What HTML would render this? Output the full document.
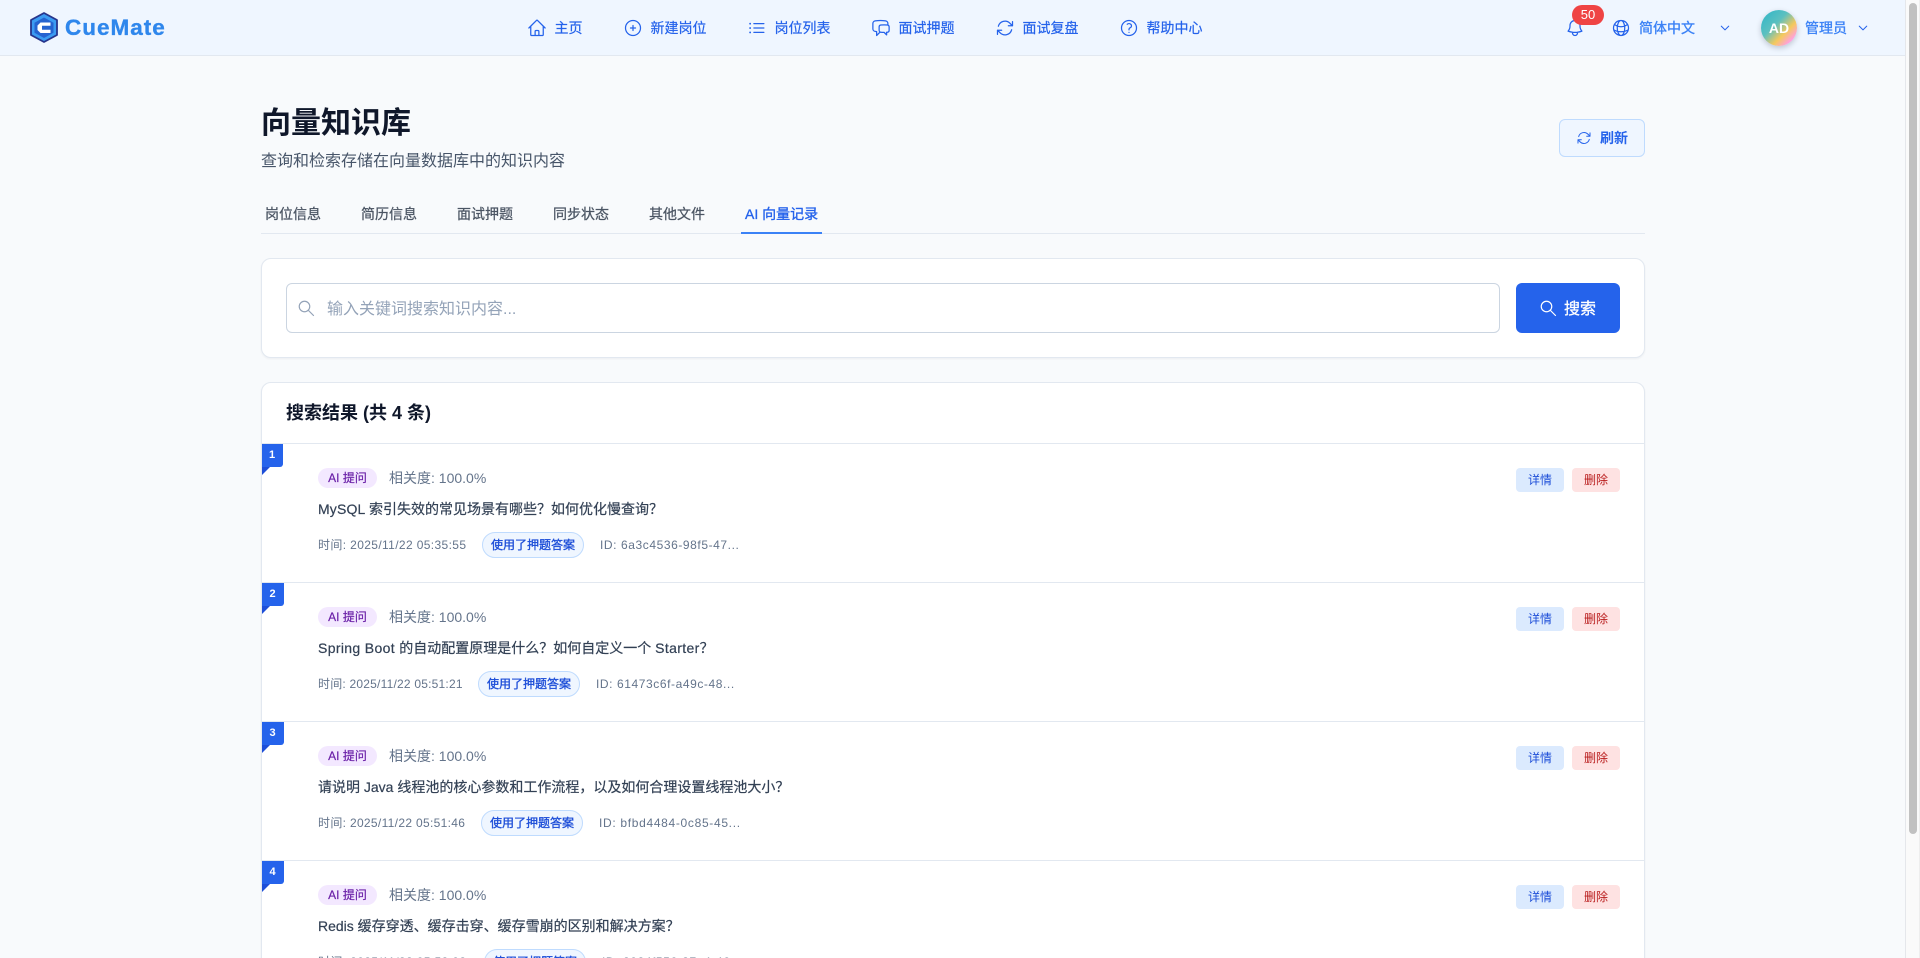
<!DOCTYPE html>
<html lang="zh-CN">
<head>
<meta charset="utf-8">
<title>向量知识库 - CueMate</title>
<style>
*{box-sizing:border-box;margin:0;padding:0}
html,body{width:1920px;height:958px;overflow:hidden;background:#f8fafc;font-family:"Liberation Sans","Noto Sans CJK SC",sans-serif}
#p{position:relative;width:1920px;height:958px;overflow:hidden;background:#f8fafc}
.a{position:absolute;white-space:nowrap}
svg{display:block;fill:none;stroke-linecap:round;stroke-linejoin:round}
.header{left:0;top:0;width:1905px;height:56px;background:#eff6ff;border-bottom:1px solid #e2e8f0}
.nav{font-size:14px;line-height:20px;color:#2563eb;top:18px;-webkit-text-stroke:.2px currentColor}
.ic{stroke:#2563eb;stroke-width:1.5}
.tab{top:204px;font-size:14px;line-height:20px;color:#4b5563;-webkit-text-stroke:.25px currentColor}
.card{background:#fff;border:1px solid #e2e8f0;border-radius:10px;box-shadow:0 1px 2px rgba(15,23,42,.05)}
.sep{left:262px;width:1382px;height:1px;background:#e2e8f0}
.rib{left:262px;width:22px;height:23px;padding-right:1px;background:#2563eb;border-radius:0 0 3px 0;color:#fff;font-size:11px;font-weight:700;line-height:22px;text-align:center}
.tail{left:262px;width:0;height:0;border-top:8px solid #1d4ed8;border-right:8px solid transparent}
.tag{left:318px;width:59px;height:20px;border-radius:10px;background:#f3e8ff;color:#6b21a8;font-size:12px;line-height:20px;text-align:center;-webkit-text-stroke:.2px currentColor}
.rel{left:389px;font-size:14px;line-height:20px;color:#64748b}
.q{left:318px;font-size:14px;line-height:20px;color:#334155;-webkit-text-stroke:.2px currentColor}
.meta{font-size:12px;line-height:16px;color:#64748b;letter-spacing:.37px}
.id{letter-spacing:.58px}
.pill{height:26px;width:102px;border:1px solid #bfdbfe;border-radius:13px;background:#eff6ff;color:#1d4ed8;font-size:12px;line-height:24px;text-align:center;-webkit-text-stroke:.35px currentColor}
.btn{width:48px;height:24px;border-radius:4px;font-size:12px;line-height:24px;text-align:center}
.b1{left:1516px;background:#dbeafe;color:#1d4ed8}
.b2{left:1572px;background:#fee2e2;color:#b91c1c}
.l{letter-spacing:.35px}
</style>
</head>
<body>
<div id="p">
<div class="a header"></div>

<svg class="a" style="left:28px;top:10px;stroke-linecap:butt" width="32" height="35" viewBox="0 0 32 35">
<path d="M16 3 L29 10 V25 L16 32 L3 25 V10 Z" fill="#3b9bf2" stroke="#27358c" stroke-width="1.8"/>
<path d="M16 7.500 L25.500 12.800 V22.700 L16 28 L6.500 22.700 V12.800 Z" fill="#2563d0"/>
<path d="M22.500 12.500 H12.500 L9.500 15.500 V20 L12.500 23 H22.500 V19.800 H14 V15.800 H22.500 Z" fill="#fff"/>
</svg>
<div class="a" style="left:65px;top:15px;font-size:22.500px;line-height:26px;font-weight:700;color:#2f87ec;letter-spacing:1px;-webkit-text-stroke:.35px #2f87ec">CueMate</div>

<svg class="a ic" style="left:526.500px;top:18px" width="20" height="20" viewBox="0 0 24 24"><path d="M2.250 12l8.954-8.955c.44-.439 1.152-.439 1.591 0L21.750 12M4.500 9.750v10.125c0 .621.504 1.125 1.125 1.125H9.750v-4.875c0-.621.504-1.125 1.125-1.125h2.250c.621 0 1.125.504 1.125 1.125V21h4.125c.621 0 1.125-.504 1.125-1.125V9.750M8.250 21h8.250"/></svg>
<div class="a nav" style="left:554.500px">主页</div>
<svg class="a ic" style="left:622.500px;top:18px" width="20" height="20" viewBox="0 0 24 24"><path d="M12 9v6m3-3H9m12 0a9 9 0 1 1-18 0 9 9 0 0 1 18 0Z"/></svg>
<div class="a nav" style="left:650.500px">新建岗位</div>
<svg class="a ic" style="left:746.500px;top:18px" width="20" height="20" viewBox="0 0 24 24"><path d="M8.250 6.750h12M8.250 12h12m-12 5.250h12M3.750 6.750h.007v.008H3.750V6.750Zm.375 0a.375.375 0 1 1-.75 0 .375.375 0 0 1 .75 0ZM3.750 12h.007v.008H3.750V12Zm.375 0a.375.375 0 1 1-.75 0 .375.375 0 0 1 .75 0Zm-.375 5.250h.007v.008H3.750v-.008Zm.375 0a.375.375 0 1 1-.75 0 .375.375 0 0 1 .75 0Z"/></svg>
<div class="a nav" style="left:774.500px">岗位列表</div>
<svg class="a ic" style="left:870.500px;top:18px" width="20" height="20" viewBox="0 0 24 24"><path d="M20.250 8.511c.884.284 1.500 1.128 1.500 2.097v4.286c0 1.136-.847 2.100-1.980 2.193-.34.027-.68.052-1.020.072v3.091l-3-3c-1.354 0-2.694-.055-4.020-.163a2.115 2.115 0 0 1-.825-.242m9.345-8.334a2.126 2.126 0 0 0-.476-.095 48.640 48.640 0 0 0-8.048 0c-1.131.094-1.976 1.057-1.976 2.192v4.286c0 .837.46 1.580 1.155 1.951m9.345-8.334V6.637c0-1.621-1.152-3.026-2.760-3.235A48.455 48.455 0 0 0 11.250 3c-2.115 0-4.198.137-6.240.402-1.608.209-2.760 1.614-2.760 3.235v6.226c0 1.621 1.152 3.026 2.760 3.235.577.075 1.157.14 1.740.194V21l4.155-4.155"/></svg>
<div class="a nav" style="left:898.500px">面试押题</div>
<svg class="a ic" style="left:994.500px;top:18px" width="20" height="20" viewBox="0 0 24 24"><path d="M16.023 9.348h4.992v-.001M2.985 19.644v-4.992m0 0h4.992m-4.993 0 3.181 3.183a8.250 8.250 0 0 0 13.803-3.700M4.031 9.865a8.250 8.250 0 0 1 13.803-3.700l3.181 3.182m0-4.991v4.990"/></svg>
<div class="a nav" style="left:1022.500px">面试复盘</div>
<svg class="a ic" style="left:1118.500px;top:18px" width="20" height="20" viewBox="0 0 24 24"><path d="M9.879 7.519c1.171-1.025 3.071-1.025 4.242 0 1.172 1.025 1.172 2.687 0 3.712-.203.179-.43.326-.67.442-.745.361-1.450.999-1.450 1.827v.75M21 12a9 9 0 1 1-18 0 9 9 0 0 1 18 0Zm-9 5.250h.008v.008H12v-.008Z"/></svg>
<div class="a nav" style="left:1146.500px">帮助中心</div>

<svg class="a ic" style="left:1565px;top:18px" width="20" height="20" viewBox="0 0 24 24"><path d="M14.857 17.082a23.848 23.848 0 0 0 5.454-1.310A8.967 8.967 0 0 1 18 9.750V9A6 6 0 0 0 6 9v.75a8.967 8.967 0 0 1-2.312 6.022c1.733.64 3.560 1.085 5.455 1.310m5.714 0a24.255 24.255 0 0 1-5.714 0m5.714 0a3 3 0 1 1-5.714 0"/></svg>
<div class="a" style="left:1572px;top:5px;width:32px;height:20px;border-radius:10px;background:#ef4444;color:#fff;font-size:13px;line-height:20px;text-align:center">50</div>
<svg class="a ic" style="left:1611px;top:18px" width="20" height="20" viewBox="0 0 24 24"><path d="M12 21a9.004 9.004 0 0 0 8.716-6.747M12 21a9.004 9.004 0 0 1-8.716-6.747M12 21c2.485 0 4.500-4.030 4.500-9S14.485 3 12 3m0 18c-2.485 0-4.500-4.030-4.500-9S9.515 3 12 3m0 0a8.997 8.997 0 0 1 7.843 4.582M12 3a8.997 8.997 0 0 0-7.843 4.582m15.686 0A11.953 11.953 0 0 1 12 10.500c-2.998 0-5.740-1.100-7.843-2.918m15.686 0A8.959 8.959 0 0 1 21 12c0 .778-.099 1.533-.284 2.253m0 0A17.919 17.919 0 0 1 12 16.500c-3.162 0-6.133-.815-8.716-2.247m0 0A9.004 9.004 0 0 1 3 12c0-1.605.42-3.113 1.157-4.418"/></svg>
<div class="a nav" style="left:1639px;color:#3b82f6;-webkit-text-stroke:.35px #3b82f6">简体中文</div>
<svg class="a" style="left:1719px;top:22px;stroke:#2563eb;stroke-width:2" width="12" height="12" viewBox="0 0 24 24"><path d="m19.500 8.250-7.500 7.500-7.500-7.500"/></svg>
<div class="a" style="left:1761px;top:10px;width:36px;height:36px;border-radius:50%;background:linear-gradient(135deg,#2bb5c9 0%,#5cc0c0 40%,#f5c95c 65%,#ff9fe5 85%);box-shadow:0 2px 6px rgba(15,23,42,.22);color:#fff;font-size:14px;font-weight:700;line-height:36px;text-align:center">AD</div>
<div class="a nav" style="left:1805px;color:#3b82f6;-webkit-text-stroke:.35px #3b82f6">管理员</div>
<svg class="a" style="left:1857px;top:22px;stroke:#2563eb;stroke-width:2" width="12" height="12" viewBox="0 0 24 24"><path d="m19.500 8.250-7.500 7.500-7.500-7.500"/></svg>

<div class="a" style="left:1905px;top:0;width:15px;height:958px;background:#fafafa;border-left:1px solid #e5e7eb;border-right:1px solid #eeeeee"></div>
<div class="a" style="left:1909px;top:3px;width:8px;height:831px;background:#c1c1c1;border-radius:4px"></div>

<div class="a" style="left:261px;top:104px;font-size:30px;line-height:40px;font-weight:700;color:#0f172a">向量知识库</div>
<div class="a" style="left:261px;top:150px;font-size:16px;line-height:24px;color:#475569">查询和检索存储在向量数据库中的知识内容</div>

<div class="a" style="left:1559px;top:119px;width:86px;height:38px;background:#eff6ff;border:1px solid #bfdbfe;border-radius:6px"></div>
<svg class="a ic" style="left:1576px;top:130px" width="16" height="16" viewBox="0 0 24 24"><path d="M16.023 9.348h4.992v-.001M2.985 19.644v-4.992m0 0h4.992m-4.993 0 3.181 3.183a8.250 8.250 0 0 0 13.803-3.700M4.031 9.865a8.250 8.250 0 0 1 13.803-3.700l3.181 3.182m0-4.991v4.990"/></svg>
<div class="a" style="left:1600px;top:128px;font-size:14px;line-height:20px;font-weight:700;color:#2563eb">刷新</div>

<div class="a tab" style="left:265px">岗位信息</div>
<div class="a tab" style="left:361px">简历信息</div>
<div class="a tab" style="left:457px">面试押题</div>
<div class="a tab" style="left:553px">同步状态</div>
<div class="a tab" style="left:649px">其他文件</div>
<div class="a tab" style="left:745px;color:#2563eb;-webkit-text-stroke:.35px #2563eb">AI 向量记录</div>
<div class="a" style="left:261px;top:233px;width:1384px;height:1px;background:#e2e8f0"></div>
<div class="a" style="left:741px;top:232px;width:81px;height:2px;background:#3b82f6"></div>

<div class="a card" style="left:261px;top:258px;width:1384px;height:100px"></div>
<div class="a" style="left:286px;top:283px;width:1214px;height:50px;background:#fff;border:1px solid #cbd5e1;border-radius:6px"></div>
<svg class="a" style="left:297px;top:299px;stroke:#94a3b8;stroke-width:1.600" width="18" height="18" viewBox="0 0 24 24"><circle cx="10" cy="10" r="7"/><path d="M15 15l7 7"/></svg>
<div class="a" style="left:327px;top:298px;font-size:16px;line-height:24px;color:#94a3b8">输入关键词搜索知识内容...</div>
<div class="a" style="left:1516px;top:283px;width:104px;height:50px;background:#2563eb;border-radius:6px"></div>
<svg class="a" style="left:1539px;top:299px;stroke:#fff;stroke-width:1.600" width="18" height="18" viewBox="0 0 24 24"><circle cx="10" cy="10" r="7"/><path d="M15 15l7 7"/></svg>
<div class="a" style="left:1564px;top:297.500px;font-size:16px;line-height:24px;color:#fff;-webkit-text-stroke:.3px #fff">搜索</div>

<div class="a card" style="left:261px;top:382px;width:1384px;height:640px"></div>
<div class="a" style="left:286px;top:400px;font-size:18px;line-height:26px;font-weight:700;color:#0f172a">搜索结果 (共 4 条)</div>

<div class="a sep" style="top:443px"></div>
<div class="a sep" style="top:582px"></div>
<div class="a sep" style="top:721px"></div>
<div class="a sep" style="top:860px"></div>

<div class="a rib" style="top:444px;width:21px">1</div><div class="a tail" style="top:467px"></div>
<div class="a tag" style="top:468px">AI 提问</div>
<div class="a rel" style="top:468px">相关度: 100.0%</div>
<div class="a q" style="top:499px"><span style="letter-spacing:.15px">MySQL </span>索引失效的常见场景有哪些？如何优化慢查询？</div>
<div class="a meta" style="left:318px;top:537px">时间: 2025/11/22 05:35:55</div>
<div class="a pill" style="left:482px;top:532px">使用了押题答案</div>
<div class="a meta id" style="left:600px;top:537px">ID: 6a3c4536-98f5-47...</div>
<div class="a btn b1" style="top:468px">详情</div><div class="a btn b2" style="top:468px">删除</div>

<div class="a rib" style="top:583px">2</div><div class="a tail" style="top:606px"></div>
<div class="a tag" style="top:607px">AI 提问</div>
<div class="a rel" style="top:607px">相关度: 100.0%</div>
<div class="a q" style="top:638px"><span class="l">Spring Boot </span>的自动配置原理是什么？如何自定义一个 <span class="l">Starter</span>？</div>
<div class="a meta" style="left:318px;top:676px;letter-spacing:.21px">时间: 2025/11/22 05:51:21</div>
<div class="a pill" style="left:478px;top:671px">使用了押题答案</div>
<div class="a meta id" style="left:596px;top:676px">ID: 61473c6f-a49c-48...</div>
<div class="a btn b1" style="top:607px">详情</div><div class="a btn b2" style="top:607px">删除</div>

<div class="a rib" style="top:722px">3</div><div class="a tail" style="top:745px"></div>
<div class="a tag" style="top:746px">AI 提问</div>
<div class="a rel" style="top:746px">相关度: 100.0%</div>
<div class="a q" style="top:777px">请说明 Java 线程池的核心参数和工作流程，以及如何合理设置线程池大小？</div>
<div class="a meta" style="left:318px;top:815px;letter-spacing:.32px">时间: 2025/11/22 05:51:46</div>
<div class="a pill" style="left:481px;top:810px">使用了押题答案</div>
<div class="a meta id" style="left:599px;top:815px;letter-spacing:.68px">ID: bfbd4484-0c85-45...</div>
<div class="a btn b1" style="top:746px">详情</div><div class="a btn b2" style="top:746px">删除</div>

<div class="a rib" style="top:861px">4</div><div class="a tail" style="top:884px"></div>
<div class="a tag" style="top:885px">AI 提问</div>
<div class="a rel" style="top:885px">相关度: 100.0%</div>
<div class="a q" style="top:916px">Redis 缓存穿透、缓存击穿、缓存雪崩的区别和解决方案？</div>
<div class="a meta" style="left:318px;top:954px">时间: 2025/11/22 05:52:08</div>
<div class="a pill" style="left:484px;top:949px">使用了押题答案</div>
<div class="a meta id" style="left:602px;top:954px">ID: 2024f556-37a4-46...</div>
<div class="a btn b1" style="top:885px">详情</div><div class="a btn b2" style="top:885px">删除</div>
</div>
</body>
</html>
